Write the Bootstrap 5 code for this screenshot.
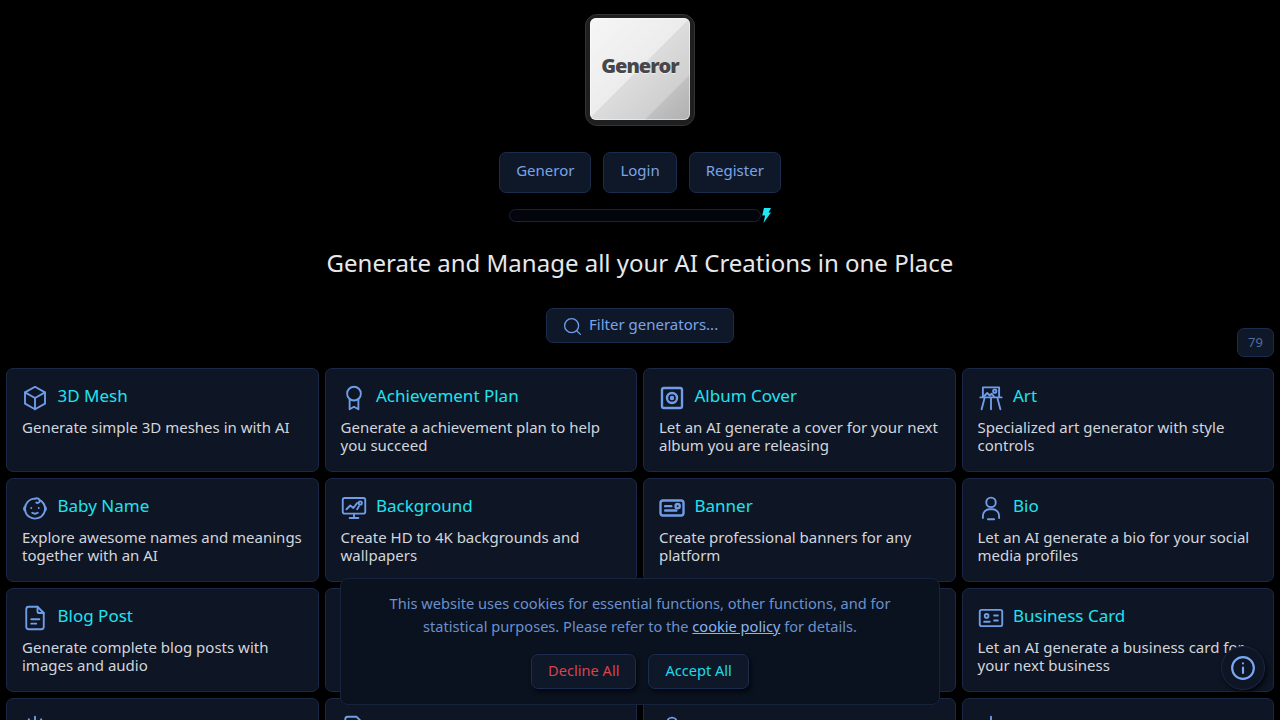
<!DOCTYPE html>
<html lang="en">
<head>
    <meta charset="UTF-8">
    <meta name="viewport" content="width=device-width, initial-scale=1.0">
    <title>Generor</title>
    <link href="https://cdn.jsdelivr.net/npm/bootstrap@5.3.3/dist/css/bootstrap.min.css" rel="stylesheet">
    <style>
        html, body {
            height: 100%;
            overflow: hidden;
        }
        body {
            background: #000;
            color: #d3d6dc;
            font-family: "Noto Sans", sans-serif;
            font-size: 15px;
        }
        /* logo */
        .logo-frame {
            width: 110px;
            height: 112px;
            margin-top: 14px;
            padding: 3px 4px 5px;
            background: #1e1f20;
            border: 1px solid #333;
            border-radius: 12px;
        }
        .logo-face {
            height: 100%;
            padding-bottom: 6px;
            border-radius: 6px;
            background: linear-gradient(135deg, #f6f6f6 0%, #ececec 49%, #dcdcdc 50%, #d0d0d0 77%, #c0c0c0 78%, #b0b0b0 100%);
            box-shadow: inset 0 0 0 1px rgba(255, 255, 255, 0.5);
            color: #46474a;
            font-family: "Open Sans", sans-serif;
            font-weight: 800;
            font-size: 20px;
            letter-spacing: -1px;
            text-shadow: 0 1px 1px rgba(255, 255, 255, 0.6);
        }
        /* buttons */
        .btn-dark-blue {
            --bs-btn-color: #7ba4e8;
            --bs-btn-bg: #0f1828;
            --bs-btn-border-color: #1b2c4d;
            --bs-btn-hover-color: #7ba4e8;
            --bs-btn-hover-bg: #14203a;
            --bs-btn-hover-border-color: #1b2c4d;
            --bs-btn-font-size: 15px;
            --bs-btn-border-radius: 7px;
            --bs-btn-padding-x: 16px;
            --bs-btn-padding-y: 8px;
            --bs-btn-line-height: 22px;
            height: 41px;
            padding-top: 6px;
        }
        .btn-cookie {
            --bs-btn-font-size: 14.6px;
            height: 35px;
            padding-top: 4px;
            padding-bottom: 5px;
            box-shadow: 2px 3px 4px rgba(0, 0, 0, 0.6);
        }
        .text-decline { --bs-btn-color: #d8434e; --bs-btn-hover-color: #d8434e; }
        .text-accept { --bs-btn-color: #1fd9e6; --bs-btn-hover-color: #1fd9e6; }
        .nav-btns { margin-top: 26px; gap: 12px; }
        /* energy bar */
        .energy-row { margin-top: 15px; height: 14px; margin-left: 1px; }
        .energy-track {
            width: 252px;
            height: 13px;
            background: #02050b;
            border: 1px solid #16233f;
            border-radius: 7px;
        }
        .page-title {
            margin: 23px 0 0;
            font-size: 24px;
            line-height: 36px;
            font-weight: 400;
            color: #e6e8ec;
        }
        /* filter row */
        .filter-row {
            display: grid;
            grid-template-columns: 1fr auto 1fr;
            align-items: start;
            margin-top: 27px;
            padding: 0 6px;
        }
        .filter-box {
            width: 188px;
            height: 35px;
            padding: 0 0 3px 15px;
            gap: 2px;
            background: #0f1828;
            border: 1px solid #1b2c4d;
            border-radius: 7px;
            color: #7ba4e8;
        }
        .count-box {
            justify-self: end;
            width: 37px;
            height: 29px;
            margin-top: 20px;
            background: #0f1828;
            border: 1px solid #1b2c4d;
            border-radius: 7px;
            color: #4f6d9e;
            font-size: 13px;
        }
        /* generator cards */
        .gen-grid {
            --bs-gutter-x: 6px;
            --bs-gutter-y: 6px;
            margin: 5px 0 0;
            padding: 0 3px;
        }
        .gen-card {
            --bs-card-bg: #0e1524;
            --bs-card-border-color: #1a2947;
            --bs-card-border-radius: 7px;
            height: 104px;
            padding: 12px 15px 0;
        }
        .gen-head {
            height: 30px;
            gap: 7.5px;
            margin-left: -2px;
            margin-bottom: 7px;
        }
        .gen-icon {
            width: 30px;
            height: 30px;
            margin-top: 4px;
            flex: none;
            fill: none;
            stroke: #6f9de8;
            stroke-width: 1.5;
            stroke-linecap: round;
            stroke-linejoin: round;
        }
        .gen-icon-bold { stroke-width: 1.9; }
        .gen-title {
            color: #1ee3f0;
            font-size: 17px;
            line-height: 28px;
        }
        .gen-text {
            margin: 0;
            font-size: 15px;
            line-height: 18px;
            color: #d3d6dc;
        }
        /* cookie notice */
        .cookie-box {
            left: 340px;
            bottom: 15px;
            width: 600px;
            height: 127px;
            padding-top: 13px;
            background: #0a121f;
            border: 1px solid #16233c;
            border-radius: 8px;
            color: #6c90cc;
            font-size: 14.6px;
            line-height: 23px;
            z-index: 10;
        }
        .cookie-link { color: #8db4f0; }
        .cookie-btns { margin-top: 16px; gap: 12px; }
        /* info button */
        .info-btn {
            right: 15px;
            bottom: 30px;
            width: 44px;
            height: 44px;
            background: #0e1524;
            border: 1px solid #1a2947;
            box-shadow: 2px 3px 5px rgba(0, 0, 0, 0.7);
            z-index: 11;
        }
        .info-icon { width: 26px; height: 26px; fill: none; stroke: #78a8f2; stroke-width: 2; stroke-linecap: round; }
    </style>
</head>
<body>
    <div class="d-flex flex-column align-items-center">
        <div class="logo-frame">
            <div class="logo-face d-flex align-items-center justify-content-center">Generor</div>
        </div>
        <div class="nav-btns d-flex justify-content-center">
            <a href="#" class="btn btn-dark-blue">Generor</a>
            <a href="#" class="btn btn-dark-blue">Login</a>
            <a href="#" class="btn btn-dark-blue">Register</a>
        </div>
        <div class="energy-row d-flex align-items-center">
            <div class="energy-track"></div>
            <svg width="11" height="15" viewBox="0 0 11 15"><path d="M3 0h7L7.6 4.6H10L2.5 15l1.6-7.4H1.2z" fill="#1ee8f2"/></svg>
        </div>
        <h1 class="page-title">Generate and Manage all your AI Creations in one Place</h1>
    </div>

    <div class="filter-row">
        <div></div>
        <div class="filter-box d-flex align-items-center">
            <svg width="21" height="21" viewBox="0 0 24 24" fill="none" stroke="#6f9de8" stroke-width="1.5" stroke-linecap="round" class="flex-shrink-0 mt-1"><circle cx="11" cy="11" r="8"/><path d="M21 21l-4.2-4.2"/></svg>
            <span class="ms-1">Filter generators...</span>
        </div>
        <div class="count-box d-flex align-items-center justify-content-center">79</div>
    </div>

    <div class="row row-cols-4 gen-grid">
        <div class="col"><div class="card gen-card">
            <div class="gen-head d-flex align-items-center">
                <svg class="gen-icon" viewBox="0 0 24 24"><path d="M12 3l8 4.5v9L12 21l-8-4.5v-9z"/><path d="M12 12l8-4.5M12 12v9M12 12L4 7.5"/></svg>
                <span class="gen-title">3D Mesh</span>
            </div>
            <p class="gen-text">Generate simple 3D meshes in with AI</p>
        </div></div>
        <div class="col"><div class="card gen-card">
            <div class="gen-head d-flex align-items-center">
                <svg class="gen-icon" viewBox="0 0 24 24"><circle cx="12" cy="8.5" r="5.5"/><path d="M8.5 13v8l3.5-2 3.5 2v-8"/></svg>
                <span class="gen-title">Achievement Plan</span>
            </div>
            <p class="gen-text">Generate a achievement plan to help you succeed</p>
        </div></div>
        <div class="col"><div class="card gen-card">
            <div class="gen-head d-flex align-items-center">
                <svg class="gen-icon gen-icon-bold" viewBox="0 0 24 24"><rect x="4" y="4" width="16" height="16" rx="1.5"/><circle cx="12" cy="12" r="4"/><circle cx="12" cy="12" r=".8"/></svg>
                <span class="gen-title">Album Cover</span>
            </div>
            <p class="gen-text">Let an AI generate a cover for your next album you are releasing</p>
        </div></div>
        <div class="col"><div class="card gen-card">
            <div class="gen-head d-flex align-items-center">
                <svg class="gen-icon" viewBox="0 0 24 24"><path d="M5.5 11.5V3.500h13v8M3.500 11.500h17M12 11.500V21M7 11.500L4.500 21M17 11.500L19.500 21"/><path d="M6 11l3-3 2 2 1.500-1.500 2 2.500"/><circle cx="15" cy="6.500" r="1.300"/></svg>
                <span class="gen-title">Art</span>
            </div>
            <p class="gen-text">Specialized art generator with style controls</p>
        </div></div>

        <div class="col"><div class="card gen-card">
            <div class="gen-head d-flex align-items-center">
                <svg class="gen-icon" viewBox="0 0 24 24"><path d="M12 4.500a8 8 0 1 0 7.300 4.700"/><path d="M12 4.500c2-.8 3.800 .2 3.800 1.900 0 1.300-1.800 2-2.800 1.200"/><path d="M15.500 5.500c1.700 .7 3 2 3.800 3.700"/><path d="M4.200 10.800a2 2 0 0 0-1 1.700 2 2 0 0 0 1 1.700M19.800 10.800a2 2 0 0 1 1 1.700 2 2 0 0 1-1 1.700"/><path d="M9.800 15.800c1.300 .9 3.100 .9 4.400 0M9 12v.01M15 12v.01"/></svg>
                <span class="gen-title">Baby Name</span>
            </div>
            <p class="gen-text">Explore awesome names and meanings together with an AI</p>
        </div></div>
        <div class="col"><div class="card gen-card">
            <div class="gen-head d-flex align-items-center">
                <svg class="gen-icon" viewBox="0 0 24 24"><rect x="3" y="4" width="18" height="12.500" rx="1.500"/><path d="M12 16.500V20M8.500 20h7"/><path d="M6 13l3-3 2.500 2 3-4"/><circle cx="17" cy="8" r="1.300"/><path d="M14.500 13l1.500-2.500"/></svg>
                <span class="gen-title">Background</span>
            </div>
            <p class="gen-text">Create HD to 4K backgrounds and wallpapers</p>
        </div></div>
        <div class="col"><div class="card gen-card">
            <div class="gen-head d-flex align-items-center">
                <svg class="gen-icon gen-icon-bold" viewBox="0 0 24 24"><rect x="2.800" y="6" width="18.400" height="12" rx="2"/><path d="M6.500 10.500h5M6.500 14h9"/><circle cx="16.500" cy="10.500" r="1.700"/></svg>
                <span class="gen-title">Banner</span>
            </div>
            <p class="gen-text">Create professional banners for any platform</p>
        </div></div>
        <div class="col"><div class="card gen-card">
            <div class="gen-head d-flex align-items-center">
                <svg class="gen-icon" viewBox="0 0 24 24"><circle cx="12" cy="7.500" r="3.800"/><path d="M5.500 20v-1.500a5.500 5.500 0 0 1 5-5.500h3a5.500 5.500 0 0 1 5 5.500V20M9.500 21h5"/></svg>
                <span class="gen-title">Bio</span>
            </div>
            <p class="gen-text">Let an AI generate a bio for your social media profiles</p>
        </div></div>

        <div class="col"><div class="card gen-card">
            <div class="gen-head d-flex align-items-center">
                <svg class="gen-icon" viewBox="0 0 24 24"><path d="M14 3v4a1 1 0 0 0 1 1h4"/><path d="M17 21H7a2 2 0 0 1-2-2V5a2 2 0 0 1 2-2h7l5 5v11a2 2 0 0 1-2 2z"/><path d="M9 13h6.500M9 16.500h4"/></svg>
                <span class="gen-title">Blog Post</span>
            </div>
            <p class="gen-text">Generate complete blog posts with images and audio</p>
        </div></div>
        <div class="col"><div class="card gen-card"></div></div>
        <div class="col"><div class="card gen-card"></div></div>
        <div class="col"><div class="card gen-card">
            <div class="gen-head d-flex align-items-center">
                <svg class="gen-icon" viewBox="0 0 24 24"><rect x="3" y="5.500" width="18" height="13" rx="1.500"/><circle cx="8.500" cy="10.300" r="1.500"/><path d="M14.500 10h3M14.500 14h3M6.500 15h4.500"/></svg>
                <span class="gen-title">Business Card</span>
            </div>
            <p class="gen-text">Let an AI generate a business card for your next business</p>
        </div></div>

        <div class="col"><div class="card gen-card">
            <div class="gen-head d-flex align-items-center">
                <svg class="gen-icon" viewBox="0 0 24 24"><path d="M12 3v5M7 5l2 3.500M17 5l-2 3.500"/></svg>
            </div>
        </div></div>
        <div class="col"><div class="card gen-card">
            <div class="gen-head d-flex align-items-center">
                <svg class="gen-icon" viewBox="0 0 24 24"><path d="M5 21V5a2 2 0 0 1 2-2h7l5 5"/></svg>
            </div>
        </div></div>
        <div class="col"><div class="card gen-card">
            <div class="gen-head d-flex align-items-center">
                <svg class="gen-icon" viewBox="0 0 24 24"><circle cx="12" cy="7.500" r="3.800"/></svg>
            </div>
        </div></div>
        <div class="col"><div class="card gen-card">
            <div class="gen-head d-flex align-items-center">
                <svg class="gen-icon" viewBox="0 0 24 24"><path d="M12 3v6"/></svg>
            </div>
        </div></div>
    </div>

    <!-- cookie notice -->
    <div class="cookie-box position-fixed text-center">
        <div>This website uses cookies for essential functions, other functions, and for<br>statistical purposes. Please refer to the <a href="#" class="cookie-link">cookie policy</a> for details.</div>
        <div class="cookie-btns d-flex justify-content-center">
            <a href="#" class="btn btn-dark-blue btn-cookie text-decline">Decline All</a>
            <a href="#" class="btn btn-dark-blue btn-cookie text-accept">Accept All</a>
        </div>
    </div>

    <div class="info-btn position-fixed rounded-circle d-flex align-items-center justify-content-center">
        <svg class="info-icon" viewBox="0 0 24 24"><circle cx="12" cy="12" r="10"/><path d="M12 11.500v5M12 7.800v.01"/></svg>
    </div>

    <script src="https://cdn.jsdelivr.net/npm/bootstrap@5.3.3/dist/js/bootstrap.bundle.min.js"></script>
</body>
</html>
